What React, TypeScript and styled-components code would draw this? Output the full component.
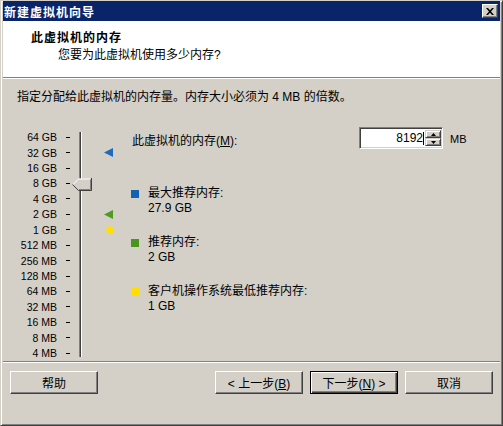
import styled, { createGlobalStyle } from "styled-components";

const FACE = "#d4d0c8";
const ROW_H = 15.43;
const SCALE_TOP = 2.5;

const scaleLabels = [
  "64 GB",
  "32 GB",
  "16 GB",
  "8 GB",
  "4 GB",
  "2 GB",
  "1 GB",
  "512 MB",
  "256 MB",
  "128 MB",
  "64 MB",
  "32 MB",
  "16 MB",
  "8 MB",
  "4 MB",
];

const rowCenter = (index: number) => SCALE_TOP + index * ROW_H + ROW_H / 2;

const legend = [
  { color: "#1461b3", label: "最大推荐内存:", value: "27.9 GB" },
  { color: "#4a9421", label: "推荐内存:", value: "2 GB" },
  { color: "#ffde00", label: "客户机操作系统最低推荐内存:", value: "1 GB" },
];

const App = () => {
  return (
    <>
      <GlobalStyle />
      <Window>
        <TitleBar>
          <TitleText>新建虚拟机向导</TitleText>
          <CloseButton>
            <svg width="8" height="7" viewBox="0 0 8 7">
              <path d="M0 0h2l2 2.2L6 0h2L5 3.5 8 7H6L4 4.8 2 7H0l3-3.5z" fill="#000" />
            </svg>
          </CloseButton>
        </TitleBar>

        <Header>
          <HeaderTitle>此虚拟机的内存</HeaderTitle>
          <HeaderSub>您要为此虚拟机使用多少内存?</HeaderSub>
        </Header>
        <Etched />

        <Body>
          <Intro>指定分配给此虚拟机的内存量。内存大小必须为 4 MB 的倍数。</Intro>
          <Content>
            <Scale>
              <ScaleLabels>
                {scaleLabels.map((label) => (
                  <ScaleRow key={label}>
                    <ScaleText>{label}</ScaleText>
                    <Tick />
                  </ScaleRow>
                ))}
              </ScaleLabels>
              <Track />
              <Thumb style={{ top: rowCenter(3) - 6 }}>
                <svg width="20" height="13" viewBox="0 0 20 13">
                  <polygon points="0.5,6.5 6.5,0.5 19.5,0.5 19.5,12.5 6.5,12.5" fill={FACE} />
                  <polyline points="1,6.5 6.5,1 18.5,1" fill="none" stroke="#fff" />
                  <polyline points="19.5,0 19.5,12.5 6.5,12.5 0.5,6.5" fill="none" stroke="#404040" />
                  <polyline points="18.5,1.5 18.5,11.5 7,11.5" fill="none" stroke="#808080" />
                </svg>
              </Thumb>
              <Marker style={{ top: rowCenter(1) - 4.5 }}>
                <svg width="9" height="9" viewBox="0 0 9 9">
                  <polygon points="0,4.5 9,0 9,9" fill="#1c6bbd" />
                </svg>
              </Marker>
              <Marker style={{ top: rowCenter(5) - 4.5 }}>
                <svg width="9" height="9" viewBox="0 0 9 9">
                  <polygon points="0,4.5 9,0 9,9" fill="#4f9a22" />
                </svg>
              </Marker>
              <Marker style={{ top: rowCenter(6) - 4, left: 89 }}>
                <svg width="8" height="8" viewBox="0 0 8 8">
                  <circle cx="4" cy="4" r="3.8" fill="#ffe000" />
                </svg>
              </Marker>
            </Scale>

            <Details>
              <MemoryRow>
                <MemoryLabel>
                  此虚拟机的内存(<U>M</U>):
                </MemoryLabel>
                <SpinBox>
                  <SpinValue>
                    8192
                    <Caret />
                  </SpinValue>
                  <SpinButtons>
                    <SpinButton>
                      <svg width="5" height="3" viewBox="0 0 5 3">
                        <polygon points="2.5,0 5,3 0,3" fill="#000" />
                      </svg>
                    </SpinButton>
                    <SpinButton>
                      <svg width="5" height="3" viewBox="0 0 5 3">
                        <polygon points="0,0 5,0 2.5,3" fill="#000" />
                      </svg>
                    </SpinButton>
                  </SpinButtons>
                </SpinBox>
                <Unit>MB</Unit>
              </MemoryRow>

              <Legend>
                {legend.map((item) => (
                  <LegendItem key={item.label}>
                    <Swatch $color={item.color} />
                    <LegendText>
                      <span>{item.label}</span>
                      <span>{item.value}</span>
                    </LegendText>
                  </LegendItem>
                ))}
              </Legend>
            </Details>
          </Content>
        </Body>

        <Etched />
        <ButtonBar>
          <Button>帮助</Button>
          <Spacer />
          <Button>
            &lt; 上一步(<U>B</U>)
          </Button>
          <Button $default>
            下一步(<U>N</U>) &gt;
          </Button>
          <Button>取消</Button>
        </ButtonBar>
      </Window>
    </>
  );
};

export default App;

const GlobalStyle = createGlobalStyle`
  html, body {
    margin: 0;
    padding: 0;
    background: ${FACE};
  }
  body {
    font-family: "Liberation Sans", "Noto Sans CJK SC", sans-serif;
    font-size: 12px;
    color: #000;
  }
`;

const Window = styled.div`
  width: 503px;
  height: 426px;
  box-sizing: border-box;
  display: flex;
  flex-direction: column;
  background: ${FACE};
  border: 1px solid;
  border-color: ${FACE} #404040 #404040 ${FACE};
  box-shadow: inset 1px 1px 0 #fff, inset -1px -1px 0 #808080;
  padding: 0 2px 2px 2px;
`;

const TitleBar = styled.div`
  height: 20px;
  flex-shrink: 0;
  display: flex;
  align-items: center;
  justify-content: space-between;
  background: #0a246a;
  padding: 0 2px 0 1px;
`;

const TitleText = styled.span`
  color: #fff;
  font-weight: bold;
  font-size: 12px;
  letter-spacing: 1px;
  font-family: "Noto Sans CJK SC", sans-serif;
`;

const CloseButton = styled.div`
  width: 16px;
  height: 14px;
  box-sizing: border-box;
  display: flex;
  align-items: center;
  justify-content: center;
  background: ${FACE};
  border: 1px solid;
  border-color: #fff #404040 #404040 #fff;
  box-shadow: inset -1px -1px 0 #808080;
`;

const Header = styled.div`
  height: 56px;
  flex-shrink: 0;
  box-sizing: border-box;
  background: #fff;
  padding: 8px 0 0 28px;
`;

const HeaderTitle = styled.div`
  font-weight: bold;
  line-height: 16px;
  letter-spacing: 1px;
  font-family: "Noto Sans CJK SC", sans-serif;
`;

const HeaderSub = styled.div`
  line-height: 16px;
  margin: 2px 0 0 27px;
`;

const Etched = styled.div`
  height: 1px;
  flex-shrink: 0;
  background: #808080;
  border-bottom: 1px solid #fff;
`;

const Body = styled.div`
  flex: 1;
  padding: 10px 14px 0;
`;

const Intro = styled.div`
  line-height: 16px;
`;

const Content = styled.div`
  display: flex;
  align-items: flex-start;
  margin-top: 22px;
`;

const Scale = styled.div`
  position: relative;
  width: 100px;
  display: flex;
  align-items: flex-start;
`;

const ScaleLabels = styled.div`
  display: flex;
  flex-direction: column;
  margin-top: ${SCALE_TOP}px;
`;

const ScaleRow = styled.div`
  height: ${ROW_H}px;
  display: flex;
  align-items: center;
`;

const ScaleText = styled.span`
  width: 40px;
  text-align: right;
  font-size: 10.5px;
  white-space: nowrap;
`;

const Tick = styled.span`
  width: 4px;
  height: 1px;
  background: #000;
  margin-left: 9px;
`;

const Track = styled.div`
  width: 1px;
  height: 225px;
  margin: 5px 0 0 9px;
  background: #404040;
  border-left: 1px solid #808080;
  border-right: 1px solid #fff;
`;

const Thumb = styled.div`
  position: absolute;
  left: 55px;
  width: 20px;
  height: 13px;
  display: flex;
`;

const Marker = styled.div`
  position: absolute;
  left: 87px;
  display: flex;
`;

const Details = styled.div`
  margin-left: 15px;
  display: flex;
  flex-direction: column;
`;

const MemoryRow = styled.div`
  display: flex;
  align-items: center;
  height: 22px;
`;

const MemoryLabel = styled.span`
  width: 227px;
  margin-top: 3px;
`;

const U = styled.span`
  text-decoration: underline;
`;

const SpinBox = styled.div`
  width: 84px;
  height: 22px;
  box-sizing: border-box;
  display: flex;
  background: #fff;
  border: 1px solid;
  border-color: #808080 #fff #fff #808080;
  box-shadow: inset 1px 1px 0 #404040, inset -1px -1px 0 ${FACE};
  padding: 2px 1px 2px 2px;
`;

const SpinValue = styled.div`
  flex: 1;
  display: flex;
  align-items: center;
  justify-content: flex-end;
  font-size: 12px;
`;

const Caret = styled.span`
  width: 1px;
  height: 13px;
  background: #000;
  margin: 0 1px 0 0;
`;

const SpinButtons = styled.div`
  width: 16px;
  display: flex;
  flex-direction: column;
`;

const SpinButton = styled.div`
  flex: 1;
  box-sizing: border-box;
  display: flex;
  align-items: center;
  justify-content: center;
  background: ${FACE};
  border: 1px solid;
  border-color: ${FACE} #404040 #404040 ${FACE};
  box-shadow: inset 1px 1px 0 #fff, inset -1px -1px 0 #808080;
`;

const Unit = styled.span`
  margin-left: 7px;
  font-size: 11px;
  margin-top: 2px;
`;

const Legend = styled.div`
  display: flex;
  flex-direction: column;
  gap: 19px;
  margin-top: 37px;
`;

const LegendItem = styled.div`
  display: flex;
  align-items: flex-start;
  margin-left: -1px;
`;

const Swatch = styled.span<{ $color: string }>`
  width: 8px;
  height: 8px;
  margin: 4px 9px 0 0;
  background: ${(p) => p.$color};
`;

const LegendText = styled.div`
  display: flex;
  flex-direction: column;
  line-height: 15px;
`;

const ButtonBar = styled.div`
  flex: 1;
  display: flex;
  align-items: flex-start;
  gap: 6px;
  padding: 8px 7px 0;
`;

const Spacer = styled.div`
  flex: 1;
`;

const Button = styled.button<{ $default?: boolean }>`
  width: 88px;
  height: 23px;
  box-sizing: border-box;
  padding: 0;
  font: inherit;
  font-size: 12px;
  color: #000;
  background: ${FACE};
  border: 1px solid;
  border-color: ${(p) => (p.$default ? "#000" : "#fff #404040 #404040 #fff")};
  box-shadow: ${(p) =>
    p.$default
      ? "inset 1px 1px 0 #fff, inset -1px -1px 0 #404040, inset -2px -2px 0 #808080"
      : "inset -1px -1px 0 #808080"};

  & + & {
    margin-left: ${(p) => (p.$default ? "1px" : "0")};
  }
`;
